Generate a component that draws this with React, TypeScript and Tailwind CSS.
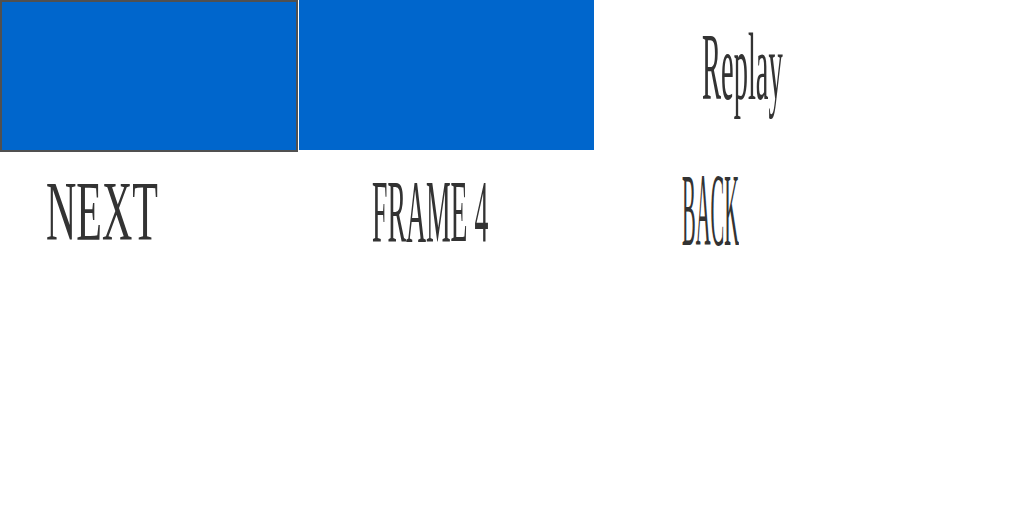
import React from "react";

export default function App() {
  return (
    <div
      className="w-[1024px] h-[512px] bg-white text-[#333333] overflow-hidden"
      style={{ fontFamily: '"Liberation Serif", "Times New Roman", serif' }}
    >
      <div className="flex items-start h-[152px]">
        <div className="w-[298px] h-[152px] border-2 border-[#505050] bg-[#0066cc]" />
        <div className="ml-px w-[295px] h-[150px] bg-[#0066cc]" />
        <div className="ml-[108px] mt-[20px] leading-none">
          <span className="inline-block whitespace-nowrap origin-top-left scale-x-[0.30] text-[95px] leading-none">
            Replay
          </span>
        </div>
      </div>
      <div className="flex items-start">
        <div className="w-[300px] pl-[46px] mt-[18px] leading-none">
          <span className="inline-block whitespace-nowrap origin-top-left scale-x-[0.50] text-[84px] leading-none">
            NEXT
          </span>
        </div>
        <div className="w-[300px] pl-[72px] mt-[16px] leading-none">
          <span className="inline-block whitespace-nowrap origin-top-left scale-x-[0.315] text-[88px] leading-none">
            FRAME 4
          </span>
        </div>
        <div className="w-[300px] pl-[82px] mt-[6px] leading-none">
          <span className="inline-block whitespace-nowrap origin-top-left scale-x-[0.197] text-[104px] leading-none">
            BACK
          </span>
        </div>
      </div>
    </div>
  );
}
